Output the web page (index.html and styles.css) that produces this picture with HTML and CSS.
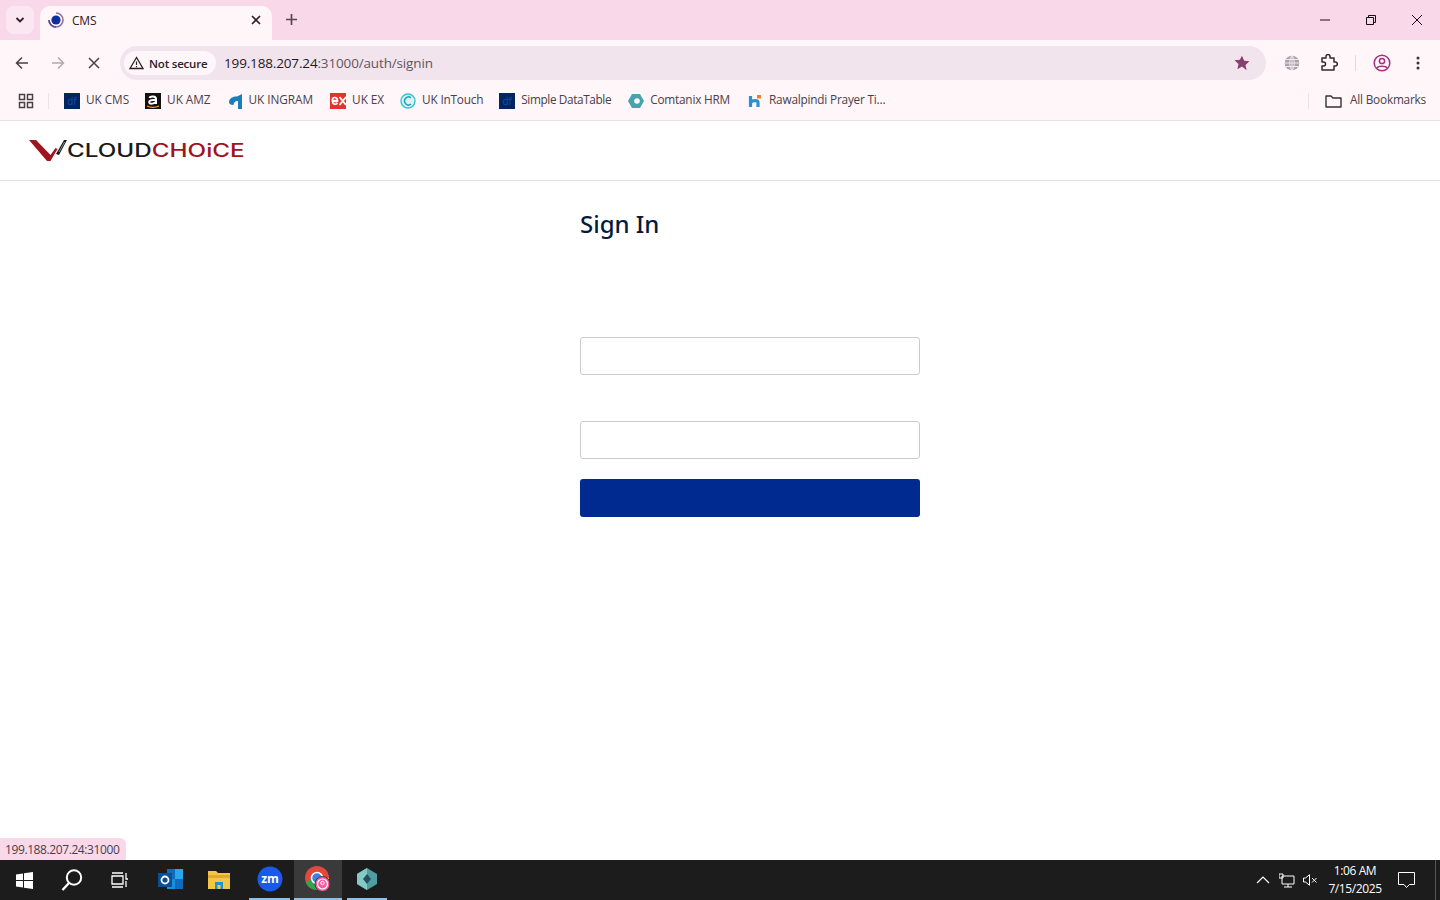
FILE: index.html
```html
<!DOCTYPE html>
<html lang="en">
<head>
<meta charset="utf-8">
<title>CMS</title>
<link rel="stylesheet" href="styles.css">
</head>
<body>
<div class="screen">
  <header class="tabstrip">
    <button class="tab-search"><svg width="10" height="8" viewBox="0 0 10 8"><path d="M1.500 2 5 5.500 8.500 2" fill="none" stroke="#2b2127" stroke-width="1.800"/></svg></button>
    <div class="tab">
      <svg class="tab-fav" width="16" height="16" viewBox="0 0 16 16"><circle cx="8" cy="8" r="4.600" fill="#0b2f9e"/><path d="M8 1a7 7 0 1 1-7 7" fill="none" stroke="#8f6f9c" stroke-width="1.600"/><path d="M1 8a7 7 0 0 0 7 7" fill="none" stroke="#5a4a9a" stroke-width="1.600"/></svg>
      <span class="tab-title">CMS</span>
      <svg class="tab-close" width="10" height="10" viewBox="0 0 10 10"><path d="M1 1l8 8M9 1l-8 8" stroke="#2b2127" stroke-width="1.600"/></svg>
    </div>
    <svg class="new-tab" width="11" height="11" viewBox="0 0 11 11"><path d="M5.500 0v11M0 5.500h11" stroke="#5a4650" stroke-width="1.700"/></svg>
    <div class="win-controls">
      <svg width="10" height="10" viewBox="0 0 10 10"><path d="M0 5h10" stroke="#111"/></svg>
      <svg width="10" height="10" viewBox="0 0 10 10"><path d="M.5 2.500h7v7h-7zM2.500 2.500V.5h7v7h-2" fill="none" stroke="#111"/></svg>
      <svg width="10" height="10" viewBox="0 0 10 10"><path d="M0 0l10 10M10 0 0 10" stroke="#111"/></svg>
    </div>
  </header>

  <nav class="toolbar">
    <svg class="tool" width="16" height="16" viewBox="0 0 16 16"><path d="M14 8H2.500M8 2.500 2.500 8 8 13.500" fill="none" stroke="#4a4046" stroke-width="1.500"/></svg>
    <svg class="tool" width="16" height="16" viewBox="0 0 16 16"><path d="M2 8h11.500M8 2.500 13.500 8 8 13.500" fill="none" stroke="#b3a8ae" stroke-width="1.500"/></svg>
    <svg class="tool" width="16" height="16" viewBox="0 0 16 16"><path d="M3 3l10 10M13 3 3 13" fill="none" stroke="#4a4046" stroke-width="1.500"/></svg>
    <div class="omnibox">
      <div class="chip">
        <svg width="15" height="14" viewBox="0 0 15 14"><path d="M7.500 1.500 1 12.500h13z" fill="none" stroke="#2b2127" stroke-width="1.300"/><path d="M7.500 5.500v3.500M7.500 10v1.200" stroke="#2b2127" stroke-width="1.200"/></svg>
        <span>Not secure</span>
      </div>
      <div class="url"><span class="url-host">199.188.207.24</span>:31000/auth/signin</div>
      <svg class="star" width="16" height="16" viewBox="0 0 16 16"><path d="M8 .8l2.200 4.900 5.300.6-4 3.600 1.100 5.300L8 11.500l-4.600 2.700 1.100-5.300-4-3.600 5.300-.6z" fill="#87406f"/></svg>
    </div>
    <svg class="tool-globe" width="16" height="16" viewBox="0 0 16 16"><circle cx="8" cy="8" r="7.300" fill="#a9a4a8"/><path d="M.7 8h14.600M1.800 4.500h12.400M1.800 11.500h12.400M8 .7v14.600M8 .7C5 3 5 13 8 15.300M8 .7c3 2.300 3 12.300 0 14.600" fill="none" stroke="#fff6fa" stroke-width=".8"/></svg>
    <svg class="tool-ext" width="18" height="18" viewBox="0 0 18 18"><path d="M2 5h4V3.500a2 2 0 0 1 4 0V5h4v4h1.300a2 2 0 0 1 0 4H14v4H2v-4h1.500a2 2 0 0 0 0-4H2z" transform="translate(0 -1)" fill="none" stroke="#2f2a2d" stroke-width="1.500" stroke-linejoin="round"/></svg>
    <span class="tool-sep"></span>
    <svg class="tool-profile" width="18" height="18" viewBox="0 0 18 18"><circle cx="9" cy="9" r="7.800" fill="none" stroke="#a62f80" stroke-width="1.500"/><circle cx="9" cy="7" r="2.600" fill="none" stroke="#a62f80" stroke-width="1.500"/><path d="M3.800 14c1.500-2.400 9-2.400 10.400 0" fill="none" stroke="#a62f80" stroke-width="1.500"/></svg>
    <svg class="tool-menu" width="4" height="14" viewBox="0 0 4 14"><circle cx="2" cy="2" r="1.500" fill="#3a3035"/><circle cx="2" cy="7" r="1.500" fill="#3a3035"/><circle cx="2" cy="12" r="1.500" fill="#3a3035"/></svg>
  </nav>

  <div class="bookmarks">
    <svg class="apps" width="16" height="16" viewBox="0 0 16 16"><path d="M1.500 1.500h5v5h-5zM9.500 1.500h5v5h-5zM1.500 9.500h5v5h-5zM9.500 9.500h5v5h-5z" fill="none" stroke="#4a4046" stroke-width="1.500"/></svg>
    <span class="bm-sep"></span>
    <a class="bm bm-loose"><span class="fav-df">df</span><span class="bm-label">UK CMS</span></a>
    <a class="bm bm-loose"><svg width="16" height="16" viewBox="0 0 16 16"><rect width="16" height="16" fill="#111"/><path d="M4.500 5c.6-2 6.500-2.400 6.500 1v5M11 6.800C6 6.800 3.800 7.500 4.200 9.500c.4 1.700 5 1.500 6.800-.6" fill="none" stroke="#fff" stroke-width="2"/><path d="M2 13c3.200 1.700 8.800 1.700 12 0" fill="none" stroke="#f5a623" stroke-width="1.200"/></svg><span class="bm-label">UK AMZ</span></a>
    <a class="bm bm-loose"><svg width="16" height="16" viewBox="0 0 16 16"><path d="M2 9c0-3.500 4-6 8-5.500L15 1v15h-4V8C8.500 7.500 7 9 6.500 12 3.500 12 2 11 2 9z" fill="#1a7fb8"/></svg><span class="bm-label">UK INGRAM</span></a>
    <a class="bm bm-loose bm-far"><svg width="16" height="16" viewBox="0 0 16 16"><rect width="16" height="16" fill="#e3342b"/><path d="M7.500 7.500H2.200M2.200 7.500c0-4 5-4 5.300 0v1H2.400c.2 3 3.500 3.500 5 1.500" fill="none" stroke="#fff" stroke-width="1.600"/><path d="M9.500 4 16 12M16 4l-6.500 8" stroke="#fff" stroke-width="1.800"/></svg><span class="bm-label">UK EX</span></a>
    <a class="bm"><svg width="16" height="16" viewBox="0 0 16 16"><circle cx="8" cy="8" r="7" fill="#d8f3f5" stroke="#3cc0cf" stroke-width="1.400"/><path d="M11 4.800a4 4 0 1 0 0 6.400" fill="none" stroke="#1f9fb4" stroke-width="1.500"/></svg><span class="bm-label">UK InTouch</span></a>
    <a class="bm bm-tight"><span class="fav-df">df</span><span class="bm-label">Simple DataTable</span></a>
    <a class="bm bm-far"><svg width="16" height="16" viewBox="0 0 16 16"><path d="M4 1h8l4 7-4 7H4L0 8z" fill="#45a5ad"/><circle cx="9" cy="8" r="2.800" fill="#fff6fa"/></svg><span class="bm-label">Comtanix HRM</span></a>
    <a class="bm bm-far"><svg width="16" height="16" viewBox="0 0 16 16"><path d="M3.500 3v11M3.500 9.500c2-2.500 7.500-2.500 7.500 0V14" fill="none" stroke="#2d8fd0" stroke-width="3.200"/><rect x="10" y="2" width="4" height="3.500" fill="#ef7d22"/></svg><span class="bm-label">Rawalpindi Prayer Ti...</span></a>
    <span class="bm-sep bm-sep-end"></span>
    <a class="bm bm-all"><svg width="17" height="14" viewBox="0 0 17 14"><path d="M1 12V2h5l2 2h8v9H1z" fill="none" stroke="#3a3035" stroke-width="1.400" stroke-linejoin="round"/></svg><span class="bm-label">All Bookmarks</span></a>
  </div>

  <div class="page">
    <div class="app-header">
      <div class="logo">
        <svg class="logo-mark" width="38" height="24" viewBox="0 0 38 24"><path d="M0 1h7l14.500 15 5-7 2 1-7 12h-3.500z" fill="#a01420"/><path d="M27 15 35 1h3L30 16z" fill="#1a1a1a"/><path d="M30 13 35.500 3" stroke="#bbb" stroke-width=".7"/></svg>
        <span class="logo-text">CLOUD<span class="logo-red">CHOiCE</span></span>
      </div>
    </div>
    <main class="signin">
      <h1>Sign In</h1>
      <input class="field field-first" type="text" aria-label="Username">
      <input class="field field-second" type="password" aria-label="Password">
      <button class="submit" type="button"></button>
    </main>
    <div class="status">199.188.207.24:31000</div>
  </div>

  <footer class="taskbar">
    <div class="task task-start"><svg width="17" height="17" viewBox="0 0 17 17"><path d="M0 2.400 7 1.400V8H0zM8 1.300 17 0v8H8zM0 9h7v6.600l-7-1zM8 9h9v8l-9-1.300z" fill="#fff"/></svg></div>
    <div class="task"><svg width="24" height="24" viewBox="0 0 24 24"><circle cx="14" cy="9.500" r="7.200" fill="none" stroke="#fff" stroke-width="2"/><path d="M9 15 2.500 22" stroke="#fff" stroke-width="2.400"/></svg></div>
    <div class="task"><svg width="18" height="16" viewBox="0 0 18 16"><path d="M1 4h11v8H1zM1 1h11M1 15h11M15 1v6h2M15 9v6" fill="none" stroke="#fff" stroke-width="1.300"/></svg></div>
    <div class="task task-outlook"><svg width="26" height="24" viewBox="0 0 26 24"><rect x="9" y="1" width="16" height="20" fill="#0f6cbd"/><rect x="17" y="1" width="8" height="10" fill="#28a8ea"/><rect x="9" y="11" width="8" height="10" fill="#1490df"/><rect x="0" y="5" width="14" height="14" fill="#0a4f94"/><circle cx="7" cy="12" r="3.500" fill="none" stroke="#fff" stroke-width="1.800"/></svg></div>
    <div class="task"><svg width="24" height="20" viewBox="0 0 24 20"><path d="M1 1h8l2 2h12v16H1z" fill="#f3c746"/><path d="M1 5h22v3H1z" fill="#e0a92d"/><path d="M8 19v-7h8v7h-2.500v-4h-3v4z" fill="#2a8fd0"/></svg></div>
    <div class="task task-zoom"><svg width="26" height="26" viewBox="0 0 26 26"><circle cx="13" cy="13" r="12.500" fill="#1a5ae8"/><text x="13" y="17" class="zm-text" text-anchor="middle">zm</text></svg></div>
    <div class="task task-chrome"><svg width="28" height="28" viewBox="0 0 28 28"><circle cx="13" cy="13" r="12" fill="#e2483c"/><path d="M13 13 23.400 19A12 12 0 0 1 1.600 16.500z" fill="#2fa44f"/><path d="M13 13 25 13A12 12 0 0 1 15 25z" fill="#f6c21c"/><circle cx="13" cy="13" r="5.500" fill="#3b7fe8" stroke="#fff" stroke-width="1.500"/><circle cx="18.500" cy="19" r="7.500" fill="#f65aa0" stroke="#3a3a3a" stroke-width="1"/><circle cx="18.500" cy="19" r="5" fill="none" stroke="#fff" stroke-width="1.200"/><circle cx="18.500" cy="18" r="1.700" fill="none" stroke="#fff" stroke-width="1"/></svg></div>
    <div class="task task-app"><svg width="24" height="24" viewBox="0 0 24 24"><path d="M12 1 22 7v10l-10 6-10-6V7z" fill="#4f9da0"/><path d="M12 1v22L2 17V7z" fill="#85c9c7"/><path d="M12 7l4 5-4 5-4-5z" fill="#24505c"/></svg></div>
    <div class="tray">
      <svg width="14" height="8" viewBox="0 0 14 8"><path d="M1 7l6-6 6 6" fill="none" stroke="#fff" stroke-width="1.200"/></svg>
      <svg class="tray-net" width="16" height="15" viewBox="0 0 16 15"><path d="M3 3h12v8H3zM9 11v3M5 14h8M0 1h4v4H0z" fill="none" stroke="#fff"/></svg>
      <svg class="tray-vol" width="15" height="12" viewBox="0 0 15 12"><path d="M.5 4h2l4-3.300v10.600l-4-3.300h-2zM9 4l4.500 4.500M13.500 4 9 8.500" fill="none" stroke="#fff"/></svg>
      <div class="clock"><span>1:06 AM</span><span>7/15/2025</span></div>
      <svg class="tray-note" width="17" height="16" viewBox="0 0 17 16"><path d="M.5.500h16v12h-5L8.500 15.500 6 12.500H.5z" fill="none" stroke="#fff"/></svg>
      <span class="show-desktop"></span>
    </div>
  </footer>
</div>
</body>
</html>
```
FILE: styles.css
```css
* { box-sizing: border-box; }
html, body { margin: 0; height: 100%; overflow: hidden; }
body { font-family: "Open Sans", "Noto Sans", sans-serif; background: #fff; }
.screen { display: flex; flex-direction: column; height: 900px; }

.tabstrip { flex: none; height: 40px; background: #f9d9e9; display: flex; align-items: flex-end; padding-left: 6px; }
.tab-search { width: 28px; height: 28px; margin-bottom: 6px; border: 0; border-radius: 8px; background: #fbe7f1; display: flex; align-items: center; justify-content: center; padding: 0; }
.tab { width: 232px; height: 34px; margin-left: 6px; background: #fff6f9; border-radius: 10px 10px 0 0; display: flex; align-items: center; padding: 0 11px 6px 8px; font-size: 12px; color: #2b2127; }
.tab-fav { flex: none; }
.tab-title { margin-left: 8px; flex: 1; letter-spacing: -.2px; }
.new-tab { margin: 0 0 15px 14px; }
.win-controls { margin-left: auto; display: flex; gap: 36px; margin-bottom: 15px; padding-right: 18px; }

.toolbar { flex: none; height: 44px; background: #fff6f9; display: flex; align-items: center; padding: 2px 14px 0 14px; }
.tool { margin-right: 20px; }
.tool:nth-child(3) { margin-right: 18px; }
.omnibox { width: 1146px; height: 34px; border-radius: 17px; background: #f2e4ed; display: flex; align-items: center; padding: 0 16px 0 4px; }
.chip { width: 92px; height: 24px; border-radius: 12px; background: #fff6f9; display: flex; align-items: center; gap: 5px; padding-left: 5px; font-size: 11.5px; font-weight: 600; color: #2b2127; letter-spacing: -.2px; }
.url { margin-left: 8px; flex: 1; font-size: 13.5px; color: #5f5660; letter-spacing: -.15px; }
.url-host { color: #1f1a1d; }
.star { flex: none; }
.tool-globe { margin-left: 18px; }
.tool-ext { margin-left: 20px; }
.tool-sep { width: 1px; height: 16px; margin-left: 17px; background: #e6d8df; }
.tool-profile { margin-left: 17px; }
.tool-menu { margin-left: 25px; }

.bookmarks { flex: none; height: 37px; background: #fff6f9; border-bottom: 1px solid #e9e1e5; display: flex; align-items: center; padding: 0 14px 3px 18px; font-size: 11.8px; color: #4a4046; letter-spacing: -.2px; white-space: nowrap; }
.apps { flex: none; }
.bm-sep { width: 1px; height: 16px; margin: 0 15px 0 14px; background: #f0dfe6; flex: none; }
.bm { display: flex; align-items: center; gap: 6px; }
.bm svg { flex: none; }
.bm + .bm { margin-left: 16px; }
.bm + .bm-far { margin-left: 17px; }
.bm-loose { letter-spacing: -.05px; }
.bm-tight { letter-spacing: -.38px; }
.bm-label { margin-bottom: 4px; }
.fav-df { width: 16px; height: 16px; background: #03245c; color: #0d4fb5; font-size: 10px; line-height: 16px; text-align: center; letter-spacing: 0; }
.bm-sep-end { margin: 0 16px 0 auto; }
.bm-all { gap: 8px; }

.page { flex: 1; position: relative; display: flex; flex-direction: column; }
.app-header { flex: none; height: 60px; border-bottom: 1px solid #e2e2e2; padding: 18px 0 0 29px; }
.logo { display: flex; align-items: center; height: 24px; }
.logo-mark { flex: none; }
.logo-text { font-family: "Inter", sans-serif; font-size: 18px; font-weight: 500; line-height: 24px; color: #1a1a1a; transform: scaleX(1.346); transform-origin: left center; white-space: nowrap; }
.logo-red { color: #a01420; }

.signin { width: 340px; margin-left: 580px; display: flex; flex-direction: column; }
.signin h1 { margin: 26px 0 0; font-family: "Noto Sans", sans-serif; font-size: 24px; line-height: 34px; font-weight: 500; color: #071a3d; }
.field { height: 38px; border: 1px solid #ccc; border-radius: 3px; background: #fff; padding: 0; }
.field-first { margin-top: 96px; }
.field-second { margin-top: 46px; }
.submit { height: 38px; margin-top: 20px; border: 0; border-radius: 3px; background: #002a8f; }
.status { position: absolute; left: 0; bottom: 0; width: 126px; height: 22px; background: #f9d9e9; border-top-right-radius: 6px; font-size: 12px; line-height: 23px; padding-left: 5px; color: #4a3f46; letter-spacing: -.4px; white-space: nowrap; }

.taskbar { flex: none; height: 40px; background: #1c1c1c; display: flex; align-items: stretch; position: relative; }
.task { width: 48px; flex: none; display: flex; align-items: center; justify-content: center; }
.task-outlook { margin-left: 3px; }
.task-zoom { margin-left: 6px; width: 41px; border-bottom: 2px solid #8fc0e8; }
.task-chrome { background: #3a3a3a; margin-left: 4px; border-bottom: 2px solid #8fc0e8; }
.task-app { margin-left: 5px; width: 40px; border-bottom: 2px solid #8fc0e8; }
.tray { margin-left: auto; display: flex; align-items: center; color: #fff; font-size: 12px; }
.tray-net { margin-left: 9px; }
.tray-vol { margin-left: 8px; }
.clock { width: 62px; margin-left: 6px; display: flex; flex-direction: column; align-items: center; line-height: 18px; letter-spacing: -.4px; }
.tray-note { margin-left: 12px; }
.show-desktop { width: 1px; height: 40px; margin-left: 20px; margin-right: 4px; background: #555; }
.zm-text { font-family: "Open Sans", sans-serif; font-size: 12px; font-weight: 700; fill: #fff; }
```
